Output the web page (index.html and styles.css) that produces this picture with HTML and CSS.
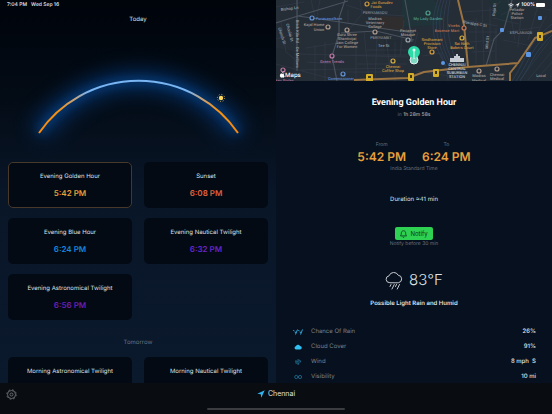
FILE: index.html
```
<!DOCTYPE html>
<html lang="en">
<head>
<meta charset="UTF-8">
<meta name="viewport" content="width=device-width, initial-scale=1">
<title>Golden Hour</title>
<link rel="stylesheet" href="styles.css">
</head>
<body>
    <header class="status-bar">
        <span class="status-left"><span>7:04 PM</span><span>Wed Sep 16</span></span>
        <span class="status-right">
            <svg width="6" height="5" viewBox="0 0 14 12" aria-hidden="true">
                <path d="M7 12l2.200-2.800a3.400 3.400 0 0 0-4.400 0z" fill="#fff"/>
                <path d="M3 7.200a6 6 0 0 1 8 0M.8 4.400a9.300 9.300 0 0 1 12.400 0" fill="none" stroke="#fff" stroke-width="1.900"/>
            </svg>
            <svg width="5" height="6" viewBox="0 0 10 12" aria-hidden="true">
                <path d="M9.500 1L.5 6.300H5V11z" fill="#fff"/>
            </svg>
            <span>100%</span>
            <span class="battery"></span>
        </span>
    </header>

    <main class="panes">
        <section class="day-pane">
            <h1 class="day-title">Today</h1>

            <svg class="sun-arc" viewBox="0 0 276 132" aria-hidden="true">
                <defs>
                    <linearGradient id="arc-color" gradientUnits="userSpaceOnUse" x1="38" y1="0" x2="238" y2="0">
                        <stop offset="0" stop-color="#f98a0c"/>
                        <stop offset=".1" stop-color="#f6900f"/>
                        <stop offset=".18" stop-color="#c9a377"/>
                        <stop offset=".25" stop-color="#79b5f2"/>
                        <stop offset=".75" stop-color="#79b5f2"/>
                        <stop offset=".82" stop-color="#c9a377"/>
                        <stop offset=".9" stop-color="#f6900f"/>
                        <stop offset="1" stop-color="#f98a0c"/>
                    </linearGradient>
                    <filter id="glow" x="-30%" y="-80%" width="160%" height="260%" color-interpolation-filters="sRGB">
                        <feGaussianBlur stdDeviation="10"/>
                    </filter>
                    <filter id="glow-near" x="-30%" y="-80%" width="160%" height="260%" color-interpolation-filters="sRGB">
                        <feGaussianBlur stdDeviation="4"/>
                    </filter>
                </defs>
                <path d="M39 103A121 121 0 0 1 238 103" class="arc-glow" filter="url(#glow)"/>
                <path d="M39 103A121 121 0 0 1 238 103" class="arc-glow-near" filter="url(#glow-near)"/>
                <path d="M39 103A121 121 0 0 1 238 103" class="arc-line" stroke="url(#arc-color)"/>
                <circle cx="221" cy="68" r="2.200" fill="#ffd95e"/>
                <circle cx="221" cy="68" r="3.600" fill="none" stroke="#e0bd55" stroke-width="1" stroke-dasharray=".9 1.930"/>
            </svg>

            <div class="cards">
                <article class="card selected">
                    <h2>Evening Golden Hour</h2>
                    <p class="time golden">5:42 PM</p>
                </article>
                <article class="card">
                    <h2>Sunset</h2>
                    <p class="time sunset">6:08 PM</p>
                </article>
                <article class="card">
                    <h2>Evening Blue Hour</h2>
                    <p class="time blue">6:24 PM</p>
                </article>
                <article class="card">
                    <h2>Evening Nautical Twilight</h2>
                    <p class="time nautical">6:32 PM</p>
                </article>
                <article class="card">
                    <h2>Evening Astronomical Twilight</h2>
                    <p class="time astro">6:56 PM</p>
                </article>
            </div>

            <h3 class="tomorrow">Tomorrow</h3>
            <div class="cards">
                <article class="card">
                    <h2>Morning Astronomical Twilight</h2>
                </article>
                <article class="card">
                    <h2>Morning Nautical Twilight</h2>
                </article>
            </div>
        </section>

        <section class="detail-pane">
            <svg class="map" viewBox="0 0 276 81" preserveAspectRatio="xMidYMid slice" role="img" aria-label="Map of Chennai">
                <rect width="276" height="81" fill="#252d37"/>
                <!-- parks -->
                <path d="M126 0h32l10 12-5 13-35 2-3-12z" fill="#1f3338"/>
                <path d="M104 16l24 1v13l-24-1z" fill="#302d2e"/>
                <path d="M0 48l18 3-2 22-16 3zM108 40h16v14h-15z" fill="#222a33"/>
                <path d="M213 0h20l6 18-15 6z" fill="#1f3037"/>
                <path d="M250 42l26-18v57h-42z" fill="#222d37"/>
                <!-- small streets -->
                <g class="street">
                    <path d="M0 7l28-5M0 39l20-6 2 30M5 22l5 30 12 10M30 48l32-5M23 54l110 3M35 0l4 17M44 0l-3 16M25 70l95-2M84 0l2 14-20 24M70 5l29 9 30 2M72 24v-14M80 37v44M88 31l5 50M101 37l-2 44M110 37l4 32M119 42v39M128 20l-4 36M75 55h56M81 64h50M69 72h56M91 50h42M31 62l27 2M39 45v35M49 42v39M0 64l56 15"/>
                    <path d="M142 32l-6 22M147 56l18-3 4 13M187 12l28-2 10-9M190 20l32 6M193 32h28M194 42l25-2M196 52l23-1M200 18v46M206 0l2 66M214 7v59M220 28v35M225 15l20-10 30 5M231 32l33-5M227 40l29 6M232 0l7 40M246 5l-4 42M262 5l-10 35M270 16l-20 40M244 80l31-41M252 80l24-29M260 80l16-18M217 18l26 6M140 71l40 6M156 70v11M170 67l2 14"/>
                </g>
                <g class="road">
                    <path d="M0 23L22 16l50-15M22 16l42 6 39 6 35 5M21 0v71M69 0l-6 18 0 16-7 22 5 25M65 33l35-2 38 9M129 0l4 22 3 20M210 66l8-27 10-10 8-29"/>
                </g>
                <!-- railway -->
                <path d="M162 0c-9 24-5 45 8 66M165 0c-9 24-4 45 8 66M168 0c-8 24-4 45 8 66M171 0c-7 26-3 46 8 66M174 0c-5 24-2 43 8 66" class="rail"/>
                <path d="M236 81c15-22 13-35 40-57M240 81c15-22 14-32 36-51M244 81c12-18 14-29 32-46" class="rail"/>
                <!-- highways -->
                <path d="M78 80l54-2 16-6 44-5 50-4 17-25 17-7M182 0l6 25 4 42M242 63l-8 10v8" class="highway"/>

                <g class="poi-label street-name">
                    <text transform="translate(5 11) rotate(-7)">Bishop Ln</text>
                    <text transform="translate(2 28) rotate(72)">Church St</text>
                    <text transform="translate(10 24) rotate(75)">Choolai St</text>
                    <text transform="translate(20 20) rotate(90)">Brick Kiln Rd</text>
                    <text transform="translate(20 47) rotate(90)">De Mellows</text>
                    <text transform="translate(187 23) rotate(10)">Rasappa C St</text>
                    <text transform="translate(212 49) rotate(-85)">Mint St</text>
                    <text transform="translate(219 16) rotate(-85)">Raja St</text>
                    <text x="102" y="47">Tee St</text>
                </g>
                <g class="poi-label area">
                    <text x="99" y="14">PERIYAMADU</text>
                    <text x="105" y="39">PERIYAMET</text>
                    <text x="245" y="34">ESPLANADE</text>
                </g>
                <g class="poi-label transit">
                    <text x="53" y="20">Purasawalkam</text>
                    <text x="65" y="80">Commissioner</text>
                </g>
                <g class="poi-label school">
                    <text x="38" y="26">Kajal Home</text><text x="43" y="31">Union</text>
                    <text x="71" y="36">Guru Shree</text><text x="71" y="40">Shantivijai</text><text x="71" y="44">Jain College</text><text x="71" y="48">For Women</text>
                    <text x="99" y="20">Madras</text><text x="99" y="24">Veterinary</text><text x="99" y="28">College</text>
                    <text x="132" y="32">Periamet</text><text x="132" y="36">Mosque</text>
                    <text x="203" y="77">Madras</text><text x="203" y="82">Medical</text>
                    <text x="221" y="76">Chennai</text><text x="221" y="80">Medical</text>
                    <text x="241" y="11">Peliador</text><text x="241" y="15">Police</text><text x="241" y="19">Station</text>
                    <text x="265" y="77">Local</text>
                </g>
                <g class="poi-label food">
                    <text x="106" y="4">Jai Gurudev</text><text x="100" y="8">Foods</text>
                    <text x="117" y="68">Chennai</text><text x="117" y="72">Coffee Shop</text>
                    <text x="156" y="41">Sindhamani</text><text x="156" y="45">Provision</text><text x="156" y="49">Store</text>
                    <text x="186" y="45">Sai Nath</text><text x="186" y="49">Bakers Court</text>
                </g>
                <g class="poi-label shop">
                    <text x="178" y="27">Viveks</text><text x="171" y="32">Essence Mart</text>
                </g>
                <g class="poi-label beauty">
                    <text x="56" y="63">Green Trends</text><text x="8" y="82">Hair Styles</text>
                </g>
                <g class="poi-label park"><text x="152" y="20">My Lady Garden</text></g>
                <g class="poi-label station">
                    <text x="181" y="66">CHENNAI</text><text x="181" y="70">CENTRAL</text><text x="181" y="74">SUBURBAN</text><text x="181" y="78">STATION</text>
                </g>
                <path d="M174 62v-4h4v-2h2v-2h2v2h2v2h4v4z" fill="#c5ccd4"/>

                <g class="poi">
                    <circle cx="36" cy="18" r="2" stroke="#6495dc"/>
                    <circle cx="67" cy="74" r="2" stroke="#6495dc"/>
                    <circle cx="52" cy="27" r="2" stroke="#b09d90"/>
                    <circle cx="71" cy="30" r="2" stroke="#b09d90"/>
                    <circle cx="99" cy="32" r="2" stroke="#b09d90"/>
                    <circle cx="132" cy="40" r="2" stroke="#a1a7ad"/>
                    <circle cx="203" cy="71" r="2" stroke="#b09d90"/>
                    <circle cx="221" cy="69" r="2" stroke="#b09d90"/>
                    <circle cx="91" cy="4" r="2" stroke="#d59c3e"/>
                    <circle cx="117" cy="61" r="2" stroke="#d5ae3e"/>
                    <circle cx="156" cy="52" r="2" stroke="#d59c3e"/>
                    <circle cx="186" cy="38" r="2" stroke="#d5ae3e"/>
                    <circle cx="188" cy="28" r="2" stroke="#c97a55"/>
                    <circle cx="56" cy="56" r="2" stroke="#c17aa6"/>
                    <circle cx="7" cy="70" r="2" stroke="#c17aa6"/>
                    <circle cx="152" cy="13" r="2" stroke="#4fa08c"/>
                </g>
                <g fill="#5b96e4">
                    <rect x="224" y="28" width="4" height="4" rx="1"/>
                    <rect x="262" y="16" width="4" height="4" rx="1"/>
                    <rect x="250" y="52" width="5" height="5" rx="1"/>
                    <circle cx="167" cy="63" r="2"/>
                </g>
                <g fill="#d3ac2a">
                    <rect x="90" y="74" width="7" height="8" rx="1"/>
                    <rect x="132" y="73" width="6" height="8" rx="1"/>
                    <rect x="157" y="69" width="6" height="8" rx="1"/>
                    <rect x="261" y="32" width="6" height="9" rx="1"/>
                </g>
                <path d="M92 76h3v2h-3zM134 75h2v3h-2zM159 71h2v3h-2zM263 35h2v3h-2z" fill="#3c3620"/>

                <circle cx="138" cy="60" r="4" fill="#7fd9c2" stroke="#dff3ee"/>
                <circle cx="138" cy="52" r="6" fill="#2ddba9"/>
                <path d="M138 50v9" stroke="#dffbf2" stroke-width="1"/>
                <circle cx="138" cy="50" r="1.500" fill="#dffbf2"/>
                <path d="M8.400 73.600c-.8-.4-1.500.1-2 .1s-1.100-.3-1.700 0c-1.100.6-1 2.300-.3 3.300.7 1.100 1.100.6 1.900.6s1.300.5 2-.6l.4-.8c-1.100-.6-1.100-2-.3-2.600zM6.300 73c0-1 .7-1.600 1.300-1.700 0 1-.6 1.600-1.300 1.700z" fill="#fff"/>
                <text x="9" y="77" class="maps-mark">Maps</text>
            </svg>

            <div class="event">
                <h2 class="event-title">Evening Golden Hour</h2>
                <p class="countdown"><span>in</span> 1h 28m 58s</p>
                <div class="range">
                    <div><small>From</small><strong>5:42 PM</strong></div>
                    <div><small>To</small><strong>6:24 PM</strong></div>
                </div>
                <p class="hint">India Standard Time</p>
                <p class="duration">Duration ≈41 min</p>
                <button type="button" class="notify">
                    <svg width="7" height="8" viewBox="0 0 14 16" aria-hidden="true">
                        <path d="M7 1.500c-3 0-4.300 2.200-4.300 4.700 0 3-1 4.300-1.900 5.600h12.400c-.9-1.300-1.900-2.600-1.900-5.600 0-2.500-1.300-4.700-4.300-4.700zM5 13.500c.7 1.600 3.300 1.600 4 0" fill="none" stroke="#06321a" stroke-width="1.500"/>
                    </svg>
                    Notify
                </button>
                <p class="hint">Notify before 30 min</p>
                <div class="weather">
                    <svg width="18" height="19" viewBox="0 0 36 38" aria-hidden="true">
                        <path d="M9 23.500a7 7 0 0 1-.9-13.900A10 10 0 0 1 26.500 8.500a7.600 7.600 0 0 1 .8 15z"/>
                        <path d="M12 27l-2 4M18.500 27l-4.500 9M23 27l-2 4M29 27l-4.500 9"/>
                    </svg>
                    <span>83°F</span>
                </div>
                <p class="summary">Possible Light Rain and Humid</p>
            </div>

            <dl class="conditions">
                <div>
                    <dt><svg width="10" height="6" viewBox="0 0 20 12" aria-hidden="true"><path d="M1 2l1 2M4 5l1 3M9 1L5 11M11 2l1 2M14 5l1 3M19 1l-4 10" class="line"/></svg>Chance Of Rain</dt>
                    <dd>26%</dd>
                </div>
                <div>
                    <dt><svg width="10" height="6" viewBox="0 0 20 12" aria-hidden="true"><path d="M6 11a3.300 3.300 0 0 1-.3-6.500A4.500 4.500 0 0 1 14 4a3.500 3.500 0 0 1 0 7z" class="solid"/></svg>Cloud Cover</dt>
                    <dd>91%</dd>
                </div>
                <div>
                    <dt><svg width="10" height="6" viewBox="0 0 20 12" aria-hidden="true"><path d="M4 4h6a2 2 0 1 0-1.500-3M4 6h11M13 3a1.600 1.600 0 1 1 1 3M5 8.500h5a1.500 1.500 0 1 1-1 2.500" class="line thin"/></svg>Wind</dt>
                    <dd>8 mph&nbsp; S</dd>
                </div>
                <div>
                    <dt><svg width="10" height="6" viewBox="0 0 20 12" aria-hidden="true"><circle cx="6.500" cy="6" r="3.200" class="line thin"/><circle cx="14" cy="6" r="3.200" class="line thin"/></svg>Visibility</dt>
                    <dd>10 mi</dd>
                </div>
            </dl>
        </section>
    </main>

    <footer class="toolbar">
        <button type="button" class="settings" aria-label="Settings">
            <svg width="11" height="11" viewBox="0 0 22 22" aria-hidden="true">
                <circle cx="11" cy="11" r="8"/>
                <circle cx="11" cy="11" r="9.500" stroke-dasharray="3.700 3.760"/>
                <circle cx="11" cy="11" r="3"/>
            </svg>
        </button>
        <button type="button" class="place">
            <svg width="8" height="8" viewBox="0 0 16 16" aria-hidden="true"><path d="M15.500.5L.5 7.500l7 1 1 7z" fill="#2fb4f2"/></svg>
            Chennai
        </button>
        <span class="home-bar"></span>
    </footer>
</body>
</html>
```
FILE: styles.css
```
* {
    box-sizing: border-box;
    margin: 0;
    padding: 0;
}
body {
    display: flex;
    flex-direction: column;
    height: 100vh;
    overflow: hidden;
    background: #06101e;
    color: #dfe2e6;
    font: 6px/10px Inter, sans-serif;
    text-rendering: geometricPrecision;
}
button {
    border: none;
    background: none;
    color: inherit;
    font: inherit;
    cursor: pointer;
}
h1, h2, h3 {
    font-size: inherit;
    font-weight: 400;
}

/* status bar, drawn over both panes */
.status-bar {
    position: absolute;
    z-index: 5;
    top: 0;
    left: 0;
    right: 0;
    display: flex;
    justify-content: space-between;
    padding: 0 7px;
    font-size: 5px;
    font-weight: 600;
    color: #dcdee0;
}
.status-left {
    display: flex;
    gap: 4px;
}
.status-right {
    display: flex;
    align-items: center;
    gap: 1px;
    color: #fff;
}
.battery {
    width: 9px;
    height: 4px;
    border-radius: 1px;
    background: #fff;
}

.panes {
    flex: 1;
    min-height: 0;
    display: grid;
    grid-template-columns: 1fr 1fr;
}

/* left pane */
.day-pane {
    overflow: hidden;
    background: linear-gradient(#00040b, #030b15 25%, #091628 50%, #0b192d);
}
.day-title {
    padding-top: 15px;
    text-align: center;
}
.sun-arc {
    display: block;
    width: 100%;
    margin-top: 5px;
    overflow: visible;
}
.arc-glow, .arc-glow-near, .arc-line {
    fill: none;
}
.arc-glow {
    stroke: #06418a;
    stroke-width: 20;
    opacity: .65;
}
.arc-glow-near {
    stroke: #0a4f9c;
    stroke-width: 6;
    opacity: .6;
}
.arc-line {
    stroke-width: 2;
}
.cards {
    position: relative;
    display: grid;
    grid-template-columns: 1fr 1fr;
    gap: 10px 12px;
    padding: 0 8px;
}
.card {
    height: 46px;
    padding-top: 9px;
    border: 1px solid transparent;
    border-radius: 5px;
    background: #030a13;
    text-align: center;
}
.card.selected {
    border-color: #47382a;
}
.time {
    margin-top: 6px;
    font-size: 8px;
    font-weight: 600;
}
.golden { color: #e8a03c; }
.sunset { color: #e0613c; }
.blue { color: #1687dd; }
.nautical { color: #6426cc; }
.astro { color: #6a1fb0; }
.tomorrow {
    margin: 18px 0 9px;
    text-align: center;
    color: #69727f;
}

/* right pane */
.detail-pane {
    overflow: hidden;
    background: #06101e;
}
.map {
    display: block;
    width: 100%;
}
.street, .road, .rail, .highway {
    fill: none;
}
.street {
    stroke: #343d49;
    stroke-width: .6;
}
.road {
    stroke: #4a525e;
    stroke-width: 1.2;
}
.rail {
    stroke: #31425b;
    stroke-width: .7;
}
.highway {
    stroke: #9a7343;
    stroke-width: 2;
}
.poi-label {
    font: 500 4px Roboto, sans-serif;
    text-anchor: middle;
}
.street-name {
    fill: #9aa0a8;
    text-anchor: start;
}
.area { fill: #7c8590; }
.transit { fill: #5c8bd0; }
.school { fill: #a39990; }
.food { fill: #c9983f; }
.shop { fill: #bd7350; }
.beauty { fill: #b473a0; }
.park { fill: #4f9c8b; }
.station { fill: #c3c9d1; }
.poi {
    fill: #252d37;
    stroke-width: 1.2;
}
.maps-mark {
    font: 500 6px Inter, sans-serif;
    fill: #fff;
}
.event {
    display: flex;
    flex-direction: column;
    align-items: center;
    padding-top: 16px;
}
.event-title {
    font: 700 9px/12px Roboto, sans-serif;
    color: #fff;
}
.countdown {
    margin-top: 1px;
    font-size: 5px;
    font-weight: 500;
    color: #a3a8b0;
}
.countdown span {
    color: #535b67;
}
.range {
    display: flex;
    gap: 16px;
    margin-top: 21px;
    text-align: center;
}
.range small, .hint {
    display: block;
    font-size: 5px;
    line-height: 8px;
    color: #69717c;
}
.range strong {
    display: block;
    font-size: 12px;
    line-height: 16px;
    font-weight: 600;
    color: #e8a03c;
}
.duration {
    margin: 22px 0;
}
.notify {
    display: flex;
    align-items: center;
    gap: 3px;
    height: 13px;
    padding: 0 5px;
    border-radius: 2px;
    background: #2fd153;
    color: #06321a;
}
.weather {
    display: flex;
    align-items: center;
    gap: 6px;
    margin-top: 22px;
    font-size: 15px;
    line-height: 20px;
    font-weight: 300;
}
.weather svg {
    fill: none;
    stroke: #c9ccd1;
    stroke-width: 2;
    stroke-linecap: round;
}
.summary {
    margin-top: 9px;
    font-weight: 600;
}
.conditions {
    padding: 15px 16px 0 17px;
}
.conditions div {
    display: flex;
    justify-content: space-between;
    height: 15px;
    line-height: 15px;
}
.conditions dt {
    display: flex;
    align-items: center;
    gap: 8px;
    color: #7c828c;
}
.conditions dd {
    font-weight: 500;
}
.line {
    fill: none;
    stroke: #2fa8dc;
    stroke-width: 2;
}
.thin {
    stroke-width: 1;
}
.solid {
    fill: #30c0f4;
}

/* bottom toolbar */
.toolbar {
    position: relative;
    display: grid;
    grid-template-columns: 1fr auto 1fr;
    align-items: start;
    height: 31px;
    padding: 5px 6px;
    background: #090c10;
}
.settings {
    justify-self: start;
    height: 12px;
}
.settings svg {
    display: block;
    fill: none;
    stroke: #7d8186;
    stroke-width: 1.5;
}
.place {
    display: flex;
    align-items: center;
    gap: 3px;
    font-size: 7px;
    line-height: 12px;
}
.home-bar {
    position: absolute;
    left: 50%;
    bottom: 4px;
    width: 25%;
    height: 2px;
    border-radius: 1px;
    background: #3a3c3f;
    transform: translateX(-50%);
}
```
